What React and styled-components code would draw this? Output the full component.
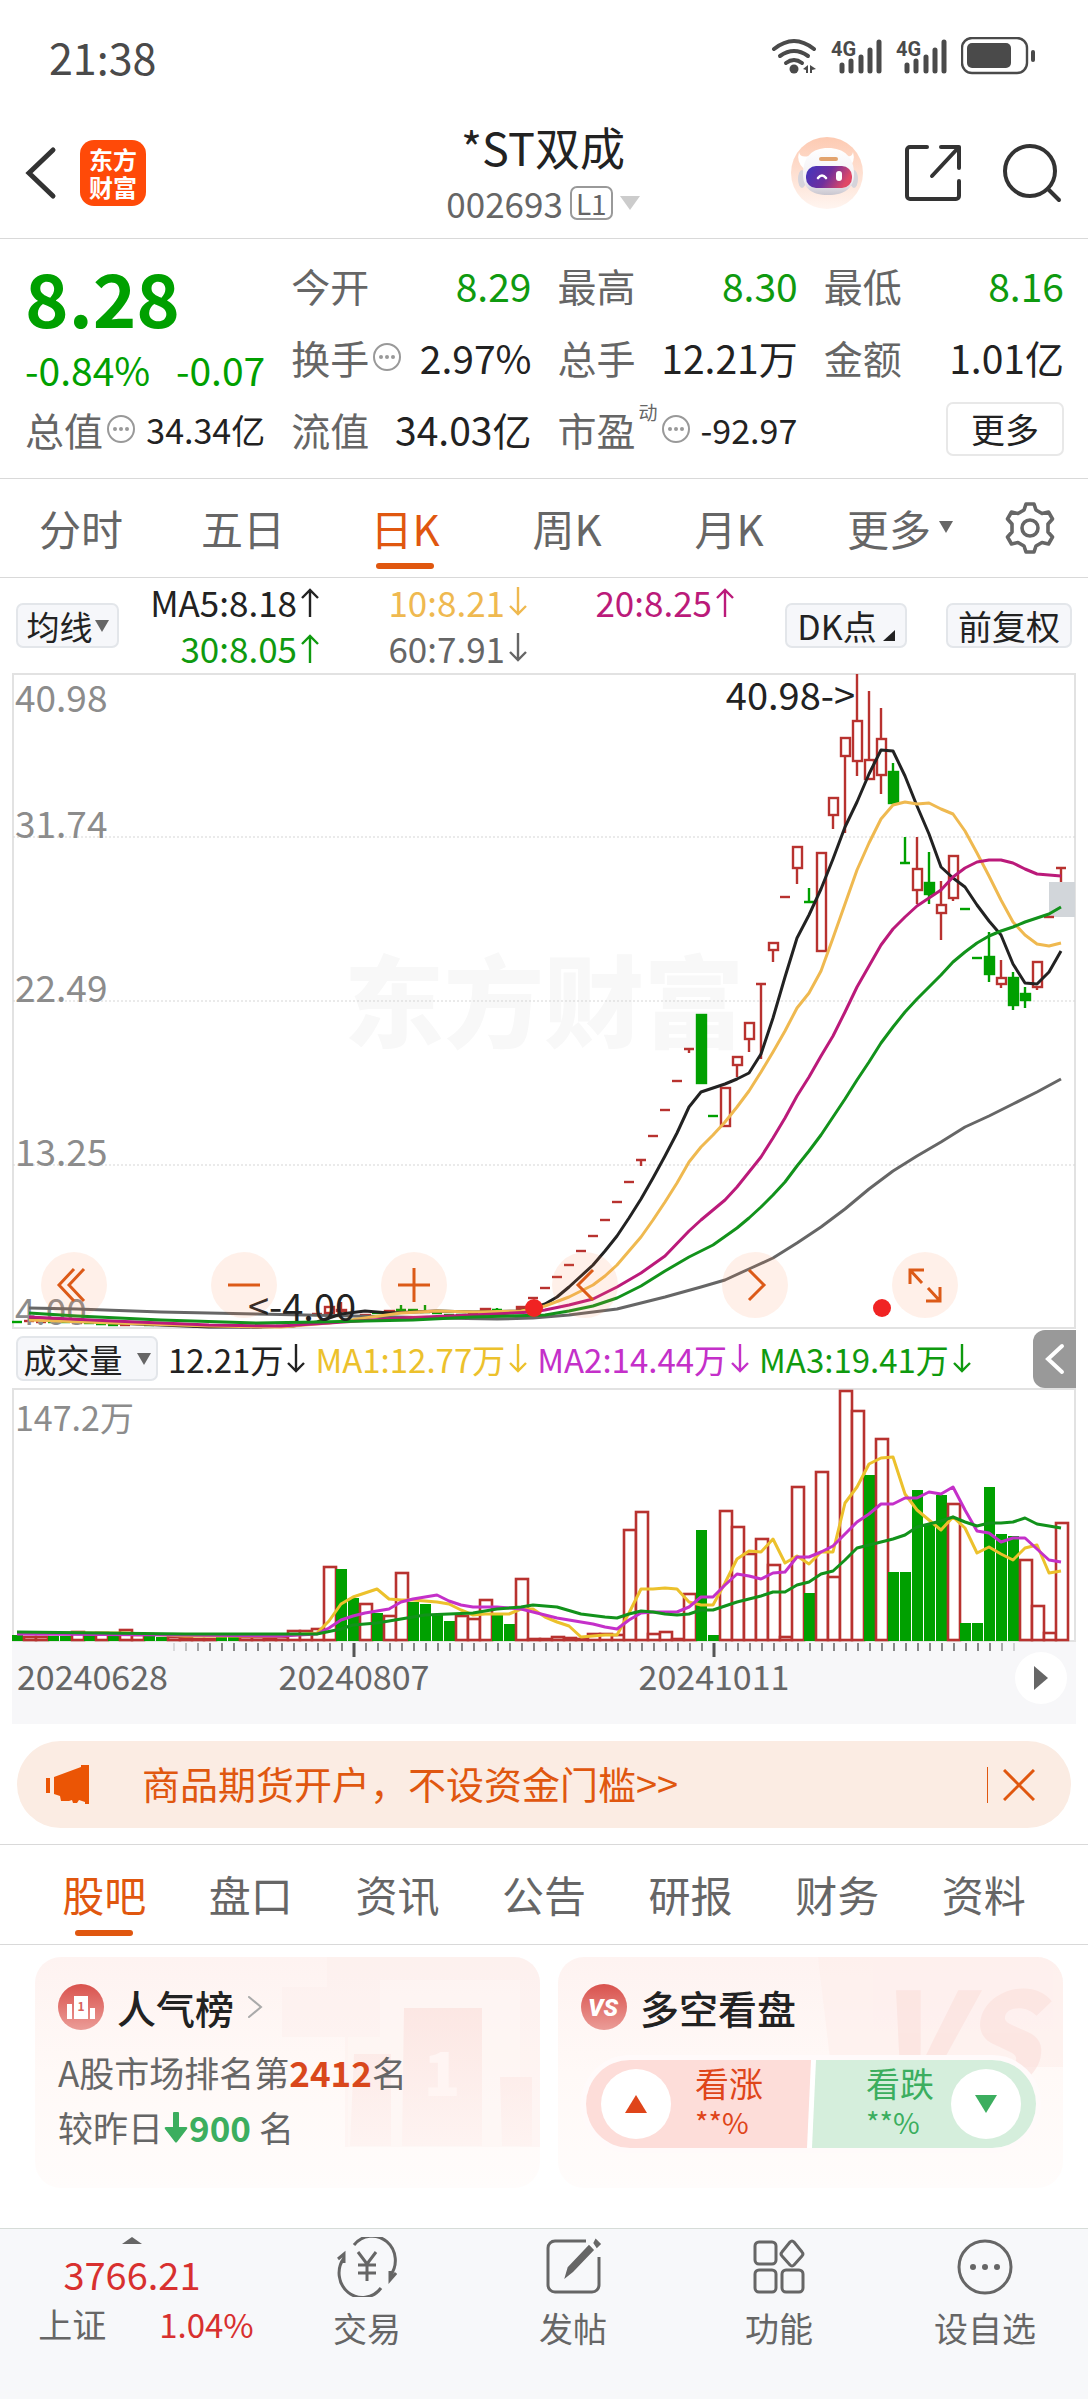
import styled, { createGlobalStyle, css } from "styled-components";

const colors = {
  text: "#222",
  label: "#666",
  muted: "#8c8c8c",
  line: "#d9d9d9",
  frame: "#e2e2e2",
  orange: "#e0570f",
  up: "#b8322f",
  down: "#00a000",
  green: "#0f9a0f",
  red: "#d8302f",
  yellow: "#efb950",
  magenta: "#bb1a7a",
  grey: "#666",
  chip: "#f6f7fa",
};

const GlobalStyle = createGlobalStyle`
  *, *::before, *::after { box-sizing: border-box; }
  body {
    margin: 0;
    background: #fff;
    color: ${colors.text};
    font-family: "Noto Sans CJK SC", "Noto Sans", sans-serif;
  }
  button {
    margin: 0;
    padding: 0;
    border: 0;
    background: none;
    color: inherit;
    font: inherit;
    cursor: pointer;
  }
  a { color: inherit; text-decoration: none; }
  svg { display: block; flex: none; }
  svg text { font-family: "Noto Sans CJK SC", "Noto Sans", sans-serif; }
  h1, h2, p { margin: 0; }
`;

/* ---------- status bar ---------- */

const StatusBar = styled.div`
  display: flex;
  align-items: center;
  justify-content: space-between;
  height: 108px;
  padding: 4px 52px 0 49px;
  color: #4a4a4a;
`;

const Clock = styled.span`
  font-size: 43px;
  line-height: 60px;
`;

const StatusIcons = styled.div`
  display: flex;
  align-items: center;
  gap: 14px;
`;

const NetworkLabel = styled.text`
  && {
    font-family: Roboto, sans-serif;
  }
`;

/* ---------- header ---------- */

const Header = styled.header`
  display: grid;
  grid-template-columns: 1fr auto 1fr;
  align-items: center;
  padding: 9px 26px 9px 24px;
  border-bottom: 1px solid ${colors.line};
`;

const HeaderSide = styled.div`
  display: flex;
  align-items: center;
  justify-content: ${({ $end }) => ($end ? "flex-end" : "flex-start")};
  gap: ${({ $end }) => ($end ? "40px" : "22px")};
`;

const Logo = styled.a`
  display: grid;
  place-content: center;
  width: 66px;
  height: 66px;
  border-radius: 14px;
  background: #ff4a08;
  color: #fff;
  font-size: 24px;
  font-weight: 700;
  line-height: 28px;
  text-align: center;
`;

const TitleBlock = styled.div`
  text-align: center;
`;

const Title = styled.h1`
  font-size: 45px;
  font-weight: 400;
  line-height: 60px;
`;

const Code = styled.button`
  display: flex;
  align-items: center;
  justify-content: center;
  gap: 7px;
  width: 100%;
  color: ${colors.label};
  font-size: 35px;
  line-height: 52px;
`;

const Level = styled.span`
  padding: 0 4px;
  border: 2px solid #999;
  border-radius: 7px;
  font-size: 28px;
  line-height: 30px;
`;

/* ---------- quote ---------- */

const Quote = styled.section`
  display: grid;
  grid-template-columns: repeat(4, 1fr);
  grid-auto-rows: 72px;
  column-gap: 26px;
  padding: 10px 24px 13px 25px;
  border-bottom: 1px solid ${colors.line};
`;

const PriceBlock = styled.div`
  grid-row: span 2;
  color: ${colors.down};
`;

const Price = styled.div`
  font-size: 74px;
  font-weight: 700;
  line-height: 94px;
`;

const Change = styled.div`
  display: flex;
  justify-content: space-between;
  font-size: 39px;
  line-height: 52px;
`;

const Field = styled.div`
  display: flex;
  align-items: center;
  justify-content: ${({ $packed }) => ($packed ? "flex-start" : "space-between")};
  gap: ${({ $packed }) => ($packed ? "10px" : "0")};
  white-space: nowrap;
`;

const FieldLabel = styled.span`
  display: flex;
  align-items: center;
  gap: 3px;
  color: ${colors.label};
  font-size: 39px;
`;

const FieldValue = styled.span`
  color: ${({ $green }) => ($green ? colors.green : colors.text)};
  font-size: ${({ $small }) => ($small ? "34px" : "39px")};
`;

const Super = styled.sup`
  align-self: flex-start;
  font-size: 19px;
  line-height: 22px;
`;

const MoreButton = styled.button`
  align-self: center;
  justify-self: end;
  width: 118px;
  height: 54px;
  border: 2px solid #e8e8e8;
  border-radius: 7px;
  font-size: 34px;
  line-height: 46px;
`;

/* ---------- tabs ---------- */

const PeriodTabs = styled.nav`
  display: grid;
  grid-template-columns: repeat(5, 162fr) 180fr 98fr;
  height: 99px;
  border-bottom: 1px solid ${colors.line};
`;

const SectionTabs = styled(PeriodTabs)`
  grid-template-columns: repeat(7, 1fr);
  height: 101px;
  padding: 0 31px;
  border-top: 1px solid ${colors.line};
`;

const Tab = styled.button`
  position: relative;
  display: flex;
  align-items: center;
  justify-content: center;
  gap: 8px;
  padding-bottom: 2px;
  color: ${colors.label};
  font-size: 42px;
  ${({ $active }) =>
    $active &&
    css`
      color: ${colors.orange};
      &::after {
        content: "";
        position: absolute;
        bottom: 8px;
        left: calc(50% - 29px);
        width: 58px;
        height: 6px;
        border-radius: 3px;
        background: ${colors.orange};
      }
    `}
`;

const GearTab = styled(Tab)`
  padding: 0 18px 0 0;
`;

/* ---------- chart ---------- */

const IndicatorRow = styled.div`
  display: flex;
  align-items: center;
  height: 95px;
  padding: 0 16px;
`;

const Chip = styled.button`
  display: flex;
  align-items: center;
  justify-content: center;
  gap: ${({ $gap }) => $gap ?? "4px"};
  height: 45px;
  padding: 0 8px;
  border: 2px solid #e3e6ea;
  border-radius: 7px;
  background: ${colors.chip};
  font-size: 34px;
  line-height: 40px;
  white-space: nowrap;
`;

const FirstChip = styled(Chip)`
  width: 103px;
  font-size: 33px;
`;

const ChipGroup = styled.div`
  display: flex;
  gap: 39px;
  margin-left: auto;

  ${Chip} {
    min-width: 122px;
    padding: 0 10px;
  }
`;

const Averages = styled.div`
  display: grid;
  grid-template-columns: 200px 208px 207px;
  grid-auto-rows: 46px;
  align-self: flex-start;
  padding-top: 1px;
`;

const Reading = styled.span`
  display: flex;
  align-items: center;
  justify-content: flex-end;
  gap: 4px;
  color: ${({ $color }) => $color};
  font-size: ${({ $compact }) => ($compact ? "33px" : "35px")};
  line-height: 46px;
  white-space: nowrap;
`;

const ChartArea = styled.section`
  margin: 0 12px;
`;

const ChartPanel = styled.div`
  position: relative;
`;

const ChartSvg = styled.svg`
  width: 100%;
  height: auto;
  overflow: visible;
`;

const ChartTools = styled.div`
  position: absolute;
  right: 118px;
  bottom: 11px;
  left: 29px;
  display: flex;
  justify-content: space-between;
`;

const RoundTool = styled.button`
  display: grid;
  place-items: center;
  width: 66px;
  height: 66px;
  border-radius: 50%;
  background: rgba(252, 130, 70, 0.12);
`;

const VolumeRow = styled.div`
  display: flex;
  align-items: center;
  gap: 10px;
  height: 59px;
  padding-left: 4px;
`;

const VolumeChip = styled(Chip)`
  gap: 14px;
  width: 142px;
  padding: 0;
  font-size: 33px;
`;

const Collapse = styled.button`
  display: grid;
  place-items: center;
  width: 43px;
  height: 58px;
  margin-left: auto;
  border-radius: 12px 0 0 12px;
  background: #999;
`;

const AxisPanel = styled.div`
  position: relative;
  background: #f7f7f9;
`;

const PlayButton = styled.button`
  position: absolute;
  top: 10px;
  right: 9px;
  display: grid;
  place-items: center;
  width: 52px;
  height: 52px;
  border-radius: 50%;
  background: #fff;
`;

/* ---------- banner ---------- */

const Banner = styled.aside`
  display: flex;
  align-items: center;
  height: 87px;
  margin: 17px 17px 16px;
  padding: 0 36px 0 28px;
  border-radius: 44px;
  background: #fbece3;
  color: ${colors.orange};
`;

const BannerLink = styled.a`
  flex: 1;
  margin-left: 51px;
  padding-bottom: 4px;
  font-size: 38px;
`;

const CloseButton = styled.button`
  display: flex;
  align-items: center;
  height: 36px;
  padding-left: 15px;
  border-left: 1px solid ${colors.orange};
`;

/* ---------- cards ---------- */

const Cards = styled.section`
  display: grid;
  grid-template-columns: 1fr 1fr;
  gap: 18px;
  padding: 12px 25px 40px 35px;
`;

const Card = styled.article`
  position: relative;
  height: 231px;
  padding: 22px 22px 0 23px;
  border-radius: 26px;
  background: linear-gradient(#fef3f1, #fff9f7 50%, #fffcfb);
  overflow: hidden;
`;

const CardArt = styled.svg`
  position: absolute;
  top: 0;
  right: 0;
`;

const CardBody = styled.div`
  position: relative;
`;

const CardTitle = styled.h2`
  display: flex;
  align-items: center;
  gap: 13px;
  font-size: 39px;
  font-weight: 500;
  line-height: 56px;
`;

const CardLine = styled.p`
  display: flex;
  align-items: center;
  margin-top: ${({ $first }) => ($first ? "9px" : "0")};
  color: ${colors.label};
  font-size: 35px;
  line-height: 55px;
  white-space: nowrap;
`;

const Strong = styled.strong`
  margin-right: ${({ $gap }) => ($gap ? "8px" : "0")};
  color: ${({ $color }) => $color};
`;

const Vote = styled.div`
  display: grid;
  grid-template-columns: 1fr 1fr;
  margin-top: 20px;
  border: 5px solid #fffafa;
  border-radius: 49px;
  background: #fff;
  overflow: hidden;
`;

const VoteButton = styled.button`
  display: flex;
  align-items: center;
  flex-direction: ${({ $down }) => ($down ? "row-reverse" : "row")};
  gap: ${({ $down }) => ($down ? "17px" : "24px")};
  height: 88px;
  padding: 0 15px;
  background: ${({ $down }) => ($down ? "#d5eedc" : "#fdddd9")};
  clip-path: ${({ $down }) =>
    $down
      ? "polygon(5px 0, 100% 0, 100% 100%, 1px 100%)"
      : "polygon(0 0, 100% 0, calc(100% - 4px) 100%, 0 100%)"};
  color: ${({ $down }) => ($down ? "#3cae5f" : "#df451a")};
  text-align: left;
`;

const VoteDot = styled.span`
  display: grid;
  place-items: center;
  width: 70px;
  height: 70px;
  border-radius: 50%;
  background: #fff;
`;

const VoteText = styled.span`
  display: grid;
  padding-bottom: 8px;
  font-size: 34px;
  line-height: 42px;
`;

const VotePercent = styled.span`
  font-size: 29px;
  line-height: 34px;
`;

/* ---------- bottom bar ---------- */

const BottomBar = styled.nav`
  display: grid;
  grid-template-columns: 264fr repeat(4, 206fr);
  height: 171px;
  border-top: 1px solid #d6dcd8;
  background: #f7f8fa;
`;

const NavItem = styled.a`
  display: flex;
  flex-direction: column;
  align-items: center;
  padding-top: 8px;
  color: ${colors.label};
  font-size: 34px;
  line-height: 62px;
`;

const IndexItem = styled(NavItem)`
  line-height: 50px;
`;

const IndexValue = styled.span`
  margin-top: ${({ $big }) => ($big ? "5px" : "0")};
  color: ${colors.red};
  font-size: ${({ $big }) => ($big ? "38px" : "33px")};
`;

const IndexLine = styled.span`
  display: flex;
  gap: 53px;
  padding-left: 28px;
`;

/* ---------- chart data ---------- */

const STEP = 12;
const xAt = (i) => 5 + i * STEP;

// [index, up, open/close top, open/close bottom, high, low]
const candles = [
  [0, 0, 648, 648], [1, 1, 647, 647], [2, 1, 648, 648], [3, 0, 648, 648], [4, 0, 648, 648],
  [5, 1, 649, 649], [6, 0, 649, 649], [7, 0, 650, 650, 648, 651], [8, 0, 651, 651], [9, 1, 651, 651],
  [11, 0, 651, 651], [13, 1, 651, 651], [15, 1, 652, 652], [17, 0, 652, 652], [18, 0, 652, 652],
  [19, 1, 653, 653], [20, 1, 653, 653], [22, 1, 652, 652], [24, 1, 649, 649],
  [25, 1, 640, 640], [26, 1, 632, 640], [27, 1, 635, 637, 628, 641], [29, 1, 640, 641],
  [30, 0, 639, 639], [31, 1, 636, 638], [32, 0, 636, 636, 631, 639], [33, 0, 636, 636],
  [34, 0, 638, 638, 631, 638], [35, 0, 639, 639], [36, 0, 641, 641], [37, 0, 641, 641],
  [38, 1, 639, 639], [39, 1, 634, 638], [40, 0, 636, 636, 634, 638], [41, 1, 639, 639],
  [42, 1, 632, 636], [43, 1, 624, 624], [44, 1, 614, 614], [45, 1, 603, 603], [46, 1, 591, 591],
  [47, 1, 577, 577], [48, 1, 562, 562], [49, 1, 546, 546], [50, 1, 528, 528], [51, 1, 508, 508],
  [52, 1, 486, 486, 486, 492], [53, 1, 462, 462], [54, 1, 436, 436], [55, 1, 407, 407],
  [56, 1, 375, 375, 375, 379], [57, 0, 340, 410], [58, 0, 442, 442], [59, 1, 413, 453],
  [60, 1, 382, 392, 382, 403], [61, 1, 348, 366, 348, 378], [62, 1, 310, 310, 310, 385],
  [63, 1, 268, 277, 268, 288], [64, 1, 223, 223], [65, 1, 172, 195, 172, 210],
  [66, 0, 228, 228, 214, 228], [67, 1, 178, 278], [68, 1, 123, 142, 123, 155],
  [69, 1, 63, 83, 63, 159], [70, 1, 46, 88, 0, 102], [71, 1, 85, 106, 17, 106],
  [72, 1, 64, 102, 34, 120], [73, 0, 97, 130, 89, 130], [74, 0, 189, 189, 163, 189],
  [75, 1, 194, 217, 163, 230], [76, 0, 208, 221, 178, 230], [77, 1, 230, 240, 207, 266],
  [78, 1, 181, 225, 181, 227], [79, 0, 235, 235], [80, 0, 284, 284], [81, 0, 282, 301, 258, 308],
  [82, 1, 303, 311, 286, 314], [83, 0, 303, 332, 298, 336], [84, 0, 319, 327, 313, 334],
  [85, 1, 287, 314, 287, 316], [86, 1, 243, 243], [87, 1, 194, 194, 194, 208],
];

// from a start index, one y per candle
const run = (from, ys) => ys.map((y, n) => [from + n, y]);

const priceLines = [
  {
    color: "#666",
    points: [[1, 634], [5, 635], [12, 638], [20, 640], [28, 642], [35, 644], [40, 645], [43, 644], [46, 641], [50, 635], [54, 623], [57, 613], [59, 606], [61, 595], [63, 584], [65, 569], [67, 553], [69, 535], [71, 515], [73, 497], [75, 482], [77, 468], [79, 453], [81, 442], [83, 430], [85, 418], [87, 405]],
  },
  {
    color: "#222",
    points: [[1, 645], [5, 647], [10, 650], [16, 653], [20, 653], [23, 652], [25, 648], [27, 640], [29, 637], [31, 639], [35, 637], [38, 638], [42, 637],
      ...run(43, [634, 630, 623, 613, 602, 591, 577, 562, 544, 525, 504, 482, 459, 433, 418, 414, 410, 405, 399, 380, 344, 303, 264, 241, 215, 185, 153, 128, 100, 76, 77, 102, 132, 160, 193, 204, 213, 231, 247, 261, 290, 309, 310, 298, 277])],
  },
  {
    color: colors.yellow,
    points: [[1, 646], [8, 649], [16, 652], [22, 653], [26, 649], [29, 644], [32, 639], [35, 637], [38, 638], [42, 637], [44, 632], [46, 623],
      ...run(48, [611, 602, 591, 577, 563, 546, 528, 509, 488, 473, 461, 448, 433, 417, 398, 378, 357, 334, 319, 297, 264, 230, 196, 169, 145, 131, 128, 130, 129, 135, 140, 157, 179, 202, 226, 248, 261, 270, 272, 269])],
  },
  {
    color: colors.magenta,
    points: [[1, 643], [8, 647], [16, 651], [22, 652], [26, 649], [32, 644], [38, 641], [43, 638], [44, 636], [46, 631], [48, 625], [50, 613], [52, 599], [54, 582],
      ...run(56, [557, 546, 536, 526, 513, 498, 483, 464, 444, 422, 403, 382, 362, 338, 313, 292, 271, 255, 243, 232, 224, 216, 203, 194, 188, 186, 186, 189, 195, 200, 201, 202])],
  },
  {
    color: "#12921b",
    points: [[1, 639], [5, 642], [12, 646], [20, 649], [25, 648], [33, 646], [38, 643], [44, 641], [46, 637], [48, 632], [50, 624], [52, 612], [54, 597], [56, 583], [58, 571],
      ...run(60, [554, 544, 533, 521, 508, 492, 477, 461, 443, 425, 406, 388, 369, 353, 338, 325, 313, 301, 288, 278, 269, 262, 257, 253, 248, 244, 240, 233])],
  },
];

// bar heights, negative for a falling day
const volumes = [
  -6, 5, 5, -5, -5, 10, -6, 9, -5, 12, 7, -6, -4, 5, 4, 3, 3, -4, -4, 5, 5, 4, 5, 11, 11, 13,
  75, -72, -43, 38, -28, 26, 69, -39, -37, -27, -20, 26, 23, 42, -27, -17, 63, 3, 3, 5, 4, 3,
  8, 8, 7, 112, 130, 8, 10, 3, 48, -111, -6, 131, 115, 88, 103, 77, 5, 155, -48, 170, 65, 251,
  231, -166, 203, -69, -69, -151, -117, -146, 138, -18, -18, -154, -107, -105, 82, 36, 9, 119,
];

const volumeLines = [
  {
    color: "#ecc12c",
    points: [[0, 8], [9, 8], [14, 5], [22, 5],
      ...run(25, [8, 20, 37, 44, 48, 52, 42, 41, 41, 40, 39, 37, 31, 26, 27, 27, 27, 32, 32, 24, 19, 15, 4, 5, 6, 6, 28, 52, 52, 53, 52, 39, 36, 36, 58, 82, 90, 89, 102, 78, 85, 77, 89, 89, 138, 154, 177, 183, 184, 147, 131, 121, 111, 124, 113, 88, 94, 87, 81, 93, 96, 68, 70])],
  },
  {
    color: "#c430c9",
    points: [[0, 7], [14, 6], [22, 5],
      ...run(25, [7, 13, 21, 25, 28, 30, 32, 39, 42, 44, 46, 40, 36, 34, 34, 34, 33, 32, 29, 26, 23, 21, 19, 17, 14, 12, 21, 28, 29, 29, 29, 34, 44, 44, 56, 67, 65, 62, 68, 69, 84, 84, 89, 95, 107, 119, 127, 137, 137, 143, 143, 149, 147, 154, 131, 110, 108, 99, 103, 103, 92, 81, 79])],
  },
  {
    color: "#12921b",
    points: [[0, 9], [14, 7], [25, 7], [27, 12], [28, 16], [30, 18], [32, 22], [34, 26], [36, 27], [38, 28], [40, 32], [42, 34], [43, 36], [45, 34], [47, 27], [49, 24],
      ...run(50, [23, 27, 30, 29, 27, 26, 27, 31, 31, 35, 39, 42, 45, 49, 49, 56, 59, 67, 70, 81, 93, 96, 99, 102, 106, 114, 117, 120, 124, 119, 115, 118, 118, 119, 123, 117, 115, 113])],
  },
];

const ticks = Array.from({ length: 71 }, (_, n) => n + 13);
const tickOpacity = (i) => Math.min(1, (i - 12) / 4, (84 - i) / 3);

const Lines = ({ lines, map = (y) => y }) =>
  lines.map(({ color, points }) => (
    <polyline
      key={color}
      points={points.map(([i, y]) => `${xAt(i)},${map(y)}`).join(" ")}
      fill="none"
      stroke={color}
      strokeWidth="3"
      strokeLinejoin="round"
    />
  ));

const Candle = ({ data: [i, up, top, bottom, high = top, low = bottom] }) => {
  const x = xAt(i);
  const color = up ? colors.up : colors.down;
  return (
    <g stroke={color} strokeWidth="2.4">
      {top === bottom ? (
        <path d={`M${x - 5} ${top}H${x + 5}M${x} ${high}V${low}`} />
      ) : (
        <>
          <path d={`M${x} ${high}V${top}M${x} ${bottom}V${low}`} />
          <rect
            x={x - 4}
            y={top + 1}
            width="9"
            height={Math.max(bottom - top - 2, 1)}
            fill={up ? "none" : color}
          />
        </>
      )}
    </g>
  );
};

const PriceChart = () => (
  <ChartSvg viewBox="0 -1 1064 656" role="img" aria-label="日K线图">
    <text x="332" y="366" fontSize="100" fontWeight="900" fill="#f8f8f8">
      东方财富
    </text>
    <rect x="1" y="0" width="1062" height="654" fill="none" stroke={colors.frame} strokeWidth="2" />
    {[163, 327, 491].map((y) => (
      <path key={y} d={`M1 ${y}H1063`} stroke="#d5d5d5" strokeDasharray="2 2" />
    ))}
    <rect x="1037" y="208" width="26" height="35" fill="#d2d6da" />
    {candles.map((c) => (
      <Candle key={c[0]} data={c} />
    ))}
    <g fontSize="37" fill={colors.muted}>
      <text x="3" y="38">40.98</text>
      <text x="3" y="164">31.74</text>
      <text x="3" y="328">22.49</text>
      <text x="3" y="492">13.25</text>
      <text x="3" y="651">4.00</text>
    </g>
    <Lines lines={priceLines} />
    <g fontSize="38" fill={colors.text}>
      <text x="843" y="36" textAnchor="end">40.98-&gt;</text>
      <text x="236" y="647">&lt;-4.00</text>
    </g>
    <circle cx="522" cy="634" r="9" fill="#f02323" />
    <circle cx="870" cy="634" r="9" fill="#f02323" />
  </ChartSvg>
);

const VolumeChart = () => (
  <ChartSvg viewBox="0 -1 1064 254" role="img" aria-label="成交量图">
    <rect x="1" y="0" width="1062" height="252" fill="none" stroke={colors.frame} strokeWidth="2" />
    <text x="3" y="42" fontSize="34" fill={colors.muted}>
      147.2万
    </text>
    {volumes.map((v, i) =>
      v < 0 ? (
        <rect key={i} x={xAt(i) - 5} y={252 + v} width="11" height={-v} fill={colors.down} />
      ) : (
        <rect
          key={i}
          x={xAt(i) - 5}
          y={253 - v}
          width="12"
          height={Math.max(v - 2, 1)}
          fill="#fff"
          stroke={colors.up}
          strokeWidth="2.6"
        />
      )
    )}
    <Lines lines={volumeLines} map={(h) => 252 - h} />
  </ChartSvg>
);

const TimeAxis = () => (
  <ChartSvg viewBox="0 0 1064 82" role="img" aria-label="日期">
    {ticks.map((i) => {
      const major = i === 28 || i === 58;
      return (
        <path
          key={i}
          d={`M${xAt(i) + 1} 1V${major ? 15 : 9}`}
          stroke={major ? "#555" : "#888"}
          strokeWidth={major ? 3 : 2}
          opacity={tickOpacity(i)}
        />
      );
    })}
    <g fontSize="34" fill={colors.label}>
      <text x="5" y="48">20240628</text>
      <text x="342" y="48" textAnchor="middle">20240807</text>
      <text x="702" y="48" textAnchor="middle">20241011</text>
    </g>
  </ChartSvg>
);

/* ---------- icons ---------- */

const Wifi = () => (
  <svg width="46" height="36" viewBox="0 0 46 36" fill="none" stroke="#4a4a4a" strokeWidth="4" strokeLinecap="round">
    <path d="M3 11q20-16 40 0" />
    <path d="M9 18q14-10 28 0" />
    <path d="M15 25q8-6 16 0" />
    <circle cx="23" cy="31" r="4.5" fill="#4a4a4a" stroke="none" />
    <path d="M32 31l5-4v8h-2v-3zM39 27l6 4-4 1v3h-2z" fill="#4a4a4a" stroke="none" />
  </svg>
);

const Signal = () => (
  <svg width="51" height="36" viewBox="0 0 51 36">
    <NetworkLabel x="0" y="18" fontSize="20" fontWeight="700" fill="#4a4a4a">
      4G
    </NetworkLabel>
    <path d="M11 27v6M20 23v10M30 19v14M39 12v21M48 4v29" stroke="#4a4a4a" strokeWidth="5" strokeLinecap="round" />
  </svg>
);

const Battery = () => (
  <svg width="75" height="38" viewBox="0 0 75 38">
    <rect x="1" y="1" width="65" height="35" rx="10" fill="none" stroke="#4a4a4a" strokeWidth="2.4" />
    <rect x="6" y="6" width="44" height="25" rx="5" fill="#4a4a4a" />
    <path d="M72 15v8" stroke="#4a4a4a" strokeWidth="4" strokeLinecap="round" />
  </svg>
);

const Chevron = ({ width, height, stroke, color, flip }) => (
  <svg width={width} height={height} viewBox={`0 0 ${width} ${height}`} fill="none">
    <path
      d={
        flip
          ? `M${stroke} ${stroke}L${width - stroke} ${height / 2}L${stroke} ${height - stroke}`
          : `M${width - stroke} ${stroke}L${stroke} ${height / 2}L${width - stroke} ${height - stroke}`
      }
      stroke={color}
      strokeWidth={stroke}
      strokeLinecap="round"
    />
  </svg>
);

const Caret = ({ size = 14, height = size, color = "#666", up }) => (
  <svg width={size} height={height} viewBox="0 0 10 10" preserveAspectRatio="none">
    <path d={up ? "M0 10L5 0L10 10Z" : "M0 0H10L5 10Z"} fill={color} />
  </svg>
);

const Arrow = ({ up }) => (
  <svg width="18" height="32" viewBox="0 0 18 32" fill="none" stroke="currentColor" strokeWidth="2.4">
    <path d={up ? "M9 31V4M1 12L9 4L17 12" : "M9 1V28M1 20L9 28L17 20"} />
  </svg>
);

const Robot = () => (
  <svg width="74" height="74" viewBox="0 0 74 74">
    <defs>
      <linearGradient id="halo" x1="0" y1="0" x2="0" y2="1">
        <stop offset="0" stopColor="#fdcab2" />
        <stop offset="1" stopColor="#fff5f0" />
      </linearGradient>
      <linearGradient id="visor" x1="0" y1="0" x2="1" y2="0.3">
        <stop offset="0" stopColor="#3f35c0" />
        <stop offset="0.55" stopColor="#6f2f9d" />
        <stop offset="1" stopColor="#e04866" />
      </linearGradient>
      <linearGradient id="shell" x1="0" y1="0" x2="0" y2="1">
        <stop offset="0" stopColor="#fff" />
        <stop offset="0.7" stopColor="#f1eff3" />
        <stop offset="1" stopColor="#c9c6cf" />
      </linearGradient>
    </defs>
    <circle cx="37" cy="37" r="36" fill="url(#halo)" />
    <path d="M9 16q1 6 10 4l-5 13q-8-7-5-17zM63 16q-1 6-9 4l4 13q8-7 5-17z" fill="#fff" />
    <ellipse cx="12" cy="43" rx="4" ry="9" fill="#d6d4db" />
    <ellipse cx="64" cy="43" rx="4" ry="9" fill="#d6d4db" />
    <path d="M38 12c16 0 26 9 26 26 0 14-9 21-26 21S13 52 13 38c0-17 9-26 25-26z" fill="url(#shell)" />
    <rect x="29" y="21" width="19" height="4" rx="2" fill="#e2a36e" />
    <rect x="16" y="30" width="46" height="22" rx="10" fill="url(#visor)" />
    <path d="M28 42q4-5 8 0" stroke="#fff" strokeWidth="2.6" fill="none" strokeLinecap="round" />
    <rect x="46" y="35" width="6" height="10" rx="3" fill="#fff" />
  </svg>
);

const Share = () => (
  <svg width="58" height="58" viewBox="0 0 58 58" fill="none" stroke="#333" strokeWidth="4" strokeLinecap="round" strokeLinejoin="round">
    <path d="M23 3H6a3 3 0 0 0-3 3v46a3 3 0 0 0 3 3h46a3 3 0 0 0 3-3V37" />
    <path d="M37 3H55V24M55 3L28 32" />
  </svg>
);

const Search = () => (
  <svg width="60" height="60" viewBox="0 0 60 60" fill="none" stroke="#333" strokeWidth="4" strokeLinecap="round">
    <circle cx="28" cy="28" r="25" />
    <path d="M46 46L57 57" />
  </svg>
);

const Info = () => (
  <svg width="30" height="30" viewBox="0 0 30 30">
    <circle cx="15" cy="15" r="13" fill="none" stroke="#999" strokeWidth="2" />
    <g fill="#999">
      <circle cx="9" cy="15" r="2" />
      <circle cx="15" cy="15" r="2" />
      <circle cx="21" cy="15" r="2" />
    </g>
  </svg>
);

const Gear = () => (
  <svg width="52" height="52" viewBox="0 0 52 52" fill="none" stroke="#666" strokeWidth="3.6" strokeLinejoin="round">
    <path d="M22 2h8l2 6 6 3.500 6.500-1.500 4 7-4.500 5v8l4.500 5-4 7L38 40.500 32 44l-2 6h-8l-2-6-6-3.500L7.500 42l-4-7L8 30v-8l-4.500-5 4-7L14 11.500 20 8z" />
    <circle cx="26" cy="26" r="8" />
  </svg>
);

const Megaphone = () => (
  <svg width="46" height="40" viewBox="0 0 46 40" fill="#eb5505">
    <path d="M1 13h4v15H1zM9 12L36 2V0h8v39h-4v-2l-6-2-2 3h-4l-1-3-3 1H16l-1-5-6-2z" />
  </svg>
);

const toolIcons = {
  首页: <path d="M20 4L5 20L20 36M30 4L15 20L30 36" />,
  缩小: <path d="M4 20H36" />,
  放大: <path d="M4 20H36M20 3V37" />,
  左移: <path d="M28 5L13 20L28 35" />,
  右移: <path d="M14 5L29 20L14 35" />,
  全屏: <path d="M5 19V5H19M5 5L17 18M35 22V36H21M35 36L23 23" />,
};

const navIcons = {
  交易: (
    <>
      <path d="M17 8a23 24 0 0 1 36 31M44 51A23 24 0 0 1 7 21M1 22l6-5v9M59 36l-6 7v-9" />
      <path d="M21 15l9 12 9-12M30 27v17M21 28h18M21 36h18" />
    </>
  ),
  发帖: (
    <>
      <path d="M43 4H12a7 7 0 0 0-7 7v37a7 7 0 0 0 7 7h37a7 7 0 0 0 7-7V20" />
      <path d="M24 38l2-7L46 10l3 3-20 21zM52 6l1-2 3 3-2 2z" fill="#666" />
    </>
  ),
  功能: (
    <>
      <rect x="6" y="5" width="21" height="22" rx="4" />
      <rect x="6" y="33" width="21" height="22" rx="4" />
      <rect x="33" y="33" width="21" height="22" rx="4" />
      <path d="M41 5q2-2 4 0l8 10q2 2 0 4l-8 9q-2 2-4 0l-8-9q-2-2 0-4z" />
    </>
  ),
  设自选: (
    <>
      <circle cx="30" cy="30" r="26" />
      <g fill="#666" stroke="none">
        <circle cx="18" cy="30" r="3" />
        <circle cx="30" cy="30" r="3" />
        <circle cx="42" cy="30" r="3" />
      </g>
    </>
  ),
};

const RankBadge = () => (
  <svg width="46" height="46" viewBox="0 0 46 46">
    <defs>
      <linearGradient id="badge" x1="0" y1="0" x2="0" y2="1">
        <stop offset="0" stopColor="#d9524d" />
        <stop offset="1" stopColor="#eb9c97" />
      </linearGradient>
    </defs>
    <circle cx="23" cy="23" r="23" fill="url(#badge)" />
    <path d="M9 20h5v15H9zM16 12h14v23H16zM32 24h5v11h-5z" fill="#fff" />
    <text x="23" y="27" fontSize="12" fontWeight="700" textAnchor="middle" fill="#d9625c">1</text>
  </svg>
);

const VsBadge = () => (
  <svg width="46" height="46" viewBox="0 0 46 46">
    <circle cx="23" cy="23" r="23" fill="url(#badge)" />
    <NetworkLabel x="22" y="32" fontSize="24" fontWeight="900" fontStyle="italic" textAnchor="middle" fill="#fff">
      VS
    </NetworkLabel>
  </svg>
);

const DownMark = () => (
  <svg width="26" height="34" viewBox="2 0 26 34" fill="#3cae5f">
    <path d="M13 2h4a1 1 0 0 1 1 1v14h7q2 0 1 2L16 32q-1 1-2 0L4 19q-1-2 1-2h7V3a1 1 0 0 1 1-1z" />
  </svg>
);

/* ---------- page ---------- */

const fields = [
  { label: "今开", value: "8.29", green: true },
  { label: "最高", value: "8.30", green: true },
  { label: "最低", value: "8.16", green: true },
  { label: "换手", value: "2.97%", info: true },
  { label: "总手", value: "12.21万" },
  { label: "金额", value: "1.01亿" },
  { label: "总值", value: "34.34亿", info: true, small: true },
  { label: "流值", value: "34.03亿" },
  { label: "市盈", value: "-92.97", info: true, small: true, sup: "动", packed: true },
];

const averages = [
  { text: "MA5:8.18", up: true, color: colors.text },
  { text: "10:8.21", color: colors.yellow },
  { text: "20:8.25", up: true, color: colors.magenta },
  { text: "30:8.05", up: true, color: colors.green },
  { text: "60:7.91", color: colors.grey },
];

const volumeReadings = [
  { text: "12.21万", color: colors.text },
  { text: "MA1:12.77万", color: "#ecc12c" },
  { text: "MA2:14.44万", color: "#c430c9" },
  { text: "MA3:19.41万", color: colors.green },
];

const periods = ["分时", "五日", "日K", "周K", "月K"];
const sections = ["股吧", "盘口", "资讯", "公告", "研报", "财务", "资料"];

export default function App() {
  return (
    <>
      <GlobalStyle />
      <StatusBar>
        <Clock>21:38</Clock>
        <StatusIcons>
          <Wifi />
          <Signal />
          <Signal />
          <Battery />
        </StatusIcons>
      </StatusBar>

      <Header>
        <HeaderSide>
          <button aria-label="返回">
            <Chevron width={34} height={56} stroke={5} color="#333" />
          </button>
          <Logo href="#home">
            东方
            <br />
            财富
          </Logo>
        </HeaderSide>
        <TitleBlock>
          <Title>*ST双成</Title>
          <Code>
            002693
            <Level>L1</Level>
            <Caret size={20} height={14} color="#ccc" />
          </Code>
        </TitleBlock>
        <HeaderSide $end>
          <button aria-label="助手"><Robot /></button>
          <button aria-label="分享"><Share /></button>
          <button aria-label="搜索"><Search /></button>
        </HeaderSide>
      </Header>

      <Quote>
        <PriceBlock>
          <Price>8.28</Price>
          <Change>
            <span>-0.84%</span>
            <span>-0.07</span>
          </Change>
        </PriceBlock>
        {fields.map((f) => (
          <Field key={f.label} $packed={f.packed}>
            <FieldLabel>
              {f.label}
              {f.sup && <Super>{f.sup}</Super>}
              {f.info && <Info />}
            </FieldLabel>
            <FieldValue $green={f.green} $small={f.small}>{f.value}</FieldValue>
          </Field>
        ))}
        <MoreButton>更多</MoreButton>
      </Quote>

      <PeriodTabs>
        {periods.map((p) => (
          <Tab key={p} $active={p === "日K"}>{p}</Tab>
        ))}
        <Tab>
          更多
          <Caret size={14} height={12} />
        </Tab>
        <GearTab aria-label="设置"><Gear /></GearTab>
      </PeriodTabs>

      <IndicatorRow>
        <FirstChip $gap="2px">
          均线
          <Caret size={14} height={12} />
        </FirstChip>
        <Averages>
          {averages.map((a) => (
            <Reading key={a.text} $color={a.color}>
              {a.text}
              <Arrow up={a.up} />
            </Reading>
          ))}
        </Averages>
        <ChipGroup>
          <Chip>
            DK点
            <svg width="14" height="32" viewBox="0 0 14 32">
              <path d="M14 20V31H2Z" fill="#222" />
            </svg>
          </Chip>
          <Chip>前复权</Chip>
        </ChipGroup>
      </IndicatorRow>

      <ChartArea>
        <ChartPanel>
          <PriceChart />
          <ChartTools>
            {Object.entries(toolIcons).map(([name, icon]) => (
              <RoundTool key={name} aria-label={name}>
                <svg width="40" height="40" viewBox="0 0 40 40" fill="none" stroke="#dc5a18" strokeWidth="3">
                  {icon}
                </svg>
              </RoundTool>
            ))}
          </ChartTools>
        </ChartPanel>
        <VolumeRow>
          <VolumeChip>
            成交量
            <Caret size={14} height={12} />
          </VolumeChip>
          {volumeReadings.map((v) => (
            <Reading key={v.text} $color={v.color} $compact>
              {v.text}
              <Arrow />
            </Reading>
          ))}
          <Collapse aria-label="收起">
            <Chevron width={22} height={34} stroke={4} color="#fff" />
          </Collapse>
        </VolumeRow>
        <VolumeChart />
        <AxisPanel>
          <TimeAxis />
          <PlayButton aria-label="播放">
            <svg width="14" height="24" viewBox="0 0 14 24">
              <path d="M0 0L14 12L0 24Z" fill="#666" />
            </svg>
          </PlayButton>
        </AxisPanel>
      </ChartArea>

      <Banner>
        <Megaphone />
        <BannerLink href="#open">商品期货开户，不设资金门槛&gt;&gt;</BannerLink>
        <CloseButton aria-label="关闭">
          <svg width="32" height="32" viewBox="0 0 32 32" stroke="#e0570f" strokeWidth="3">
            <path d="M1 1L31 31M31 1L1 31" />
          </svg>
        </CloseButton>
      </Banner>

      <SectionTabs>
        {sections.map((s) => (
          <Tab key={s} $active={s === "股吧"}>{s}</Tab>
        ))}
      </SectionTabs>

      <Cards>
        <Card>
          <CardArt width="270" height="231" viewBox="0 0 270 231">
            <defs>
              <linearGradient id="podium" x1="0" y1="0" x2="0" y2="1">
                <stop offset="0" stopColor="#fbe1dd" />
                <stop offset="1" stopColor="#fef2f0" />
              </linearGradient>
            </defs>
            <path d="M57 0H270V190H75V80H12V30H57Z" fill="#fdeeeb" opacity="0.4" />
            <path d="M110 23H250V190H78V80H110Z" fill="#fff9f8" opacity="0.4" />
            <path d="M84 97H121V189H80ZM134 51H212V189H132ZM230 120H262V189H232Z" fill="url(#podium)" opacity="0.7" />
            <text x="172" y="139" fontSize="60" fontWeight="900" textAnchor="middle" fill="#fff5f3">1</text>
          </CardArt>
          <CardBody>
            <CardTitle>
              <RankBadge />
              人气榜
              <Chevron width={16} height={24} stroke={2} color="#aaa" flip />
            </CardTitle>
            <CardLine $first>
              A股市场排名第<Strong $color="#d9481c">2412</Strong>名
            </CardLine>
            <CardLine>
              较昨日
              <DownMark />
              <Strong $color="#3cae5f" $gap>900</Strong>名
            </CardLine>
          </CardBody>
        </Card>
        <Card>
          <CardArt width="250" height="231" viewBox="0 0 250 231">
            <path d="M5 0H250V110H18Z" fill="#fdeeeb" opacity="0.6" />
            <text x="60" y="130" fontSize="130" fontWeight="900" fontStyle="italic" fill="#fbdfdb" opacity="0.6">VS</text>
          </CardArt>
          <CardBody>
            <CardTitle>
              <VsBadge />
              多空看盘
            </CardTitle>
            <Vote>
              <VoteButton>
                <VoteDot><Caret size={22} height={18} color="#df451a" up /></VoteDot>
                <VoteText>
                  看涨
                  <VotePercent>**%</VotePercent>
                </VoteText>
              </VoteButton>
              <VoteButton $down>
                <VoteDot><Caret size={22} height={18} color="#3cae5f" /></VoteDot>
                <VoteText>
                  看跌
                  <VotePercent>**%</VotePercent>
                </VoteText>
              </VoteButton>
            </Vote>
          </CardBody>
        </Card>
      </Cards>

      <BottomBar>
        <IndexItem href="#index">
          <Caret size={20} height={7} up />
          <IndexValue $big>3766.21</IndexValue>
          <IndexLine>
            上证
            <IndexValue>1.04%</IndexValue>
          </IndexLine>
        </IndexItem>
        {Object.entries(navIcons).map(([name, icon]) => (
          <NavItem key={name} href={`#${name}`}>
            <svg width="60" height="60" viewBox="0 0 60 60" fill="none" stroke="#666" strokeWidth="3">
              {icon}
            </svg>
            {name}
          </NavItem>
        ))}
      </BottomBar>
    </>
  );
}
